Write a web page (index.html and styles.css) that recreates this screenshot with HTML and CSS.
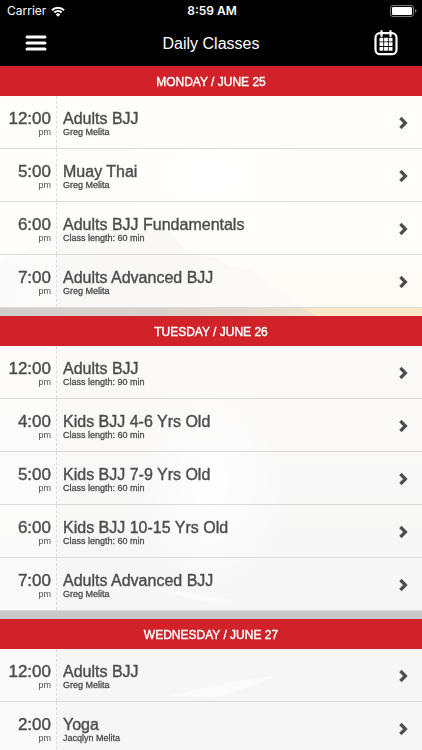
FILE: index.html
```html
<!DOCTYPE html>
<html lang="en">
<head>
<meta charset="utf-8">
<meta name="viewport" content="width=device-width, initial-scale=1">
<title>Daily Classes</title>
<link rel="stylesheet" href="styles.css">
</head>
<body>
<svg class="defs" aria-hidden="true">
  <symbol id="chevron" viewBox="0 0 10 14"><path d="M2.4 2 7.4 7 2.4 12" fill="none" stroke="currentColor" stroke-width="3.2"/></symbol>
</svg>
<svg class="backdrop" viewBox="0 0 422 750" preserveAspectRatio="none" aria-hidden="true">
  <defs>
    <linearGradient id="sky" x2="0" y2="1"><stop offset="0" stop-color="#f9efe3"/><stop offset=".75" stop-color="#fbf0e0"/><stop offset="1" stop-color="#fbe6c4"/></linearGradient>
    <linearGradient id="sea" x2="0" y2="1"><stop offset="0" stop-color="#ede0d4"/><stop offset=".35" stop-color="#dad5d1"/><stop offset=".65" stop-color="#c9c9ca"/><stop offset="1" stop-color="#c8c9ca"/></linearGradient>
    <linearGradient id="hill"><stop offset="0" stop-color="#d0cecd"/><stop offset=".5" stop-color="#d9d2cc"/><stop offset="1" stop-color="#eee0cd"/></linearGradient>
    <radialGradient id="glow"><stop offset="0" stop-color="#fff"/><stop offset=".3" stop-color="#fff" stop-opacity=".7"/><stop offset="1" stop-color="#fff" stop-opacity="0"/></radialGradient>
  </defs>
  <rect width="422" height="320" fill="url(#sky)"/>
  <ellipse cx="210" cy="177" rx="120" ry="85" fill="url(#glow)"/>
  <path d="M0 262 35 247 65 232 110 228 145 226 170 232 187 252 215 258 230 266 250 270 270 285 302 307 320 318H0Z" fill="url(#hill)"/>
  <rect y="317" width="422" height="433" fill="url(#sea)"/>
  <ellipse cx="210" cy="485" rx="75" ry="115" fill="url(#glow)" opacity=".8"/>
  <path d="M170 696Q215 684 280 675Q245 690 215 697ZM130 584 245 602 210 602Z" fill="#fff" opacity=".5"/>
</svg>
<div class="app">
  <header class="top">
    <div class="status">
      <div class="carrier"><span>Carrier</span>
        <svg class="wifi" viewBox="0 0 14 11" aria-hidden="true"><path d="M1 4.2a8.4 8.4 0 0 1 12 0M3.3 6.5a5.2 5.2 0 0 1 7.4 0" fill="none" stroke="currentColor" stroke-width="2"/><path d="M7 10.8 4.7 8.4a3.3 3.3 0 0 1 4.6 0Z" fill="currentColor"/></svg>
      </div>
      <time class="clock">8:59 AM</time>
      <svg class="battery" viewBox="0 0 27 12" aria-hidden="true"><rect x=".5" y=".5" width="23" height="11" rx="2.5" fill="none" stroke="#777"/><rect x="2" y="2" width="20" height="8" rx="1.2" fill="#fff"/><path d="M25 4q1.5.5 1.5 2T25 8Z" fill="#777"/></svg>
    </div>
    <nav class="bar">
      <button class="icon-button" aria-label="Menu"><svg class="menu" viewBox="0 0 22 16" aria-hidden="true"><path d="M2 2H20M2 8H20M2 14H20" stroke="currentColor" stroke-width="3" stroke-linecap="round"/></svg></button>
      <h1>Daily Classes</h1>
      <button class="icon-button" aria-label="Calendar"><svg class="calendar" viewBox="0 0 24 26" aria-hidden="true"><rect x="1.5" y="3.2" width="21" height="21" rx="4.5" fill="none" stroke="currentColor" stroke-width="2.2"/><path d="M7.5 1.2V6M16.5 1.2V6" stroke="currentColor" stroke-width="2.2" stroke-linecap="round"/><path d="M5.5 9.6H18.5M5.5 14.2H18.5M5.5 18.8H18.5" stroke="currentColor" stroke-width="3.7" stroke-dasharray="3.8 .8"/></svg></button>
    </nav>
  </header>
  <main class="schedule">
    <section class="day">
      <h2>MONDAY / JUNE 25</h2>
      <ul>
        <li><a class="row" href="#"><span class="time"><b>12:00</b><small>pm</small></span><span class="info"><strong>Adults BJJ</strong><small>Greg Melita</small></span><svg class="chevron" aria-hidden="true"><use href="#chevron"/></svg></a></li>
        <li><a class="row" href="#"><span class="time"><b>5:00</b><small>pm</small></span><span class="info"><strong>Muay Thai</strong><small>Greg Melita</small></span><svg class="chevron" aria-hidden="true"><use href="#chevron"/></svg></a></li>
        <li><a class="row" href="#"><span class="time"><b>6:00</b><small>pm</small></span><span class="info"><strong>Adults BJJ Fundamentals</strong><small>Class length: 60 min</small></span><svg class="chevron" aria-hidden="true"><use href="#chevron"/></svg></a></li>
        <li><a class="row" href="#"><span class="time"><b>7:00</b><small>pm</small></span><span class="info"><strong>Adults Advanced BJJ</strong><small>Greg Melita</small></span><svg class="chevron" aria-hidden="true"><use href="#chevron"/></svg></a></li>
      </ul>
    </section>
    <section class="day">
      <h2>TUESDAY / JUNE 26</h2>
      <ul>
        <li><a class="row" href="#"><span class="time"><b>12:00</b><small>pm</small></span><span class="info"><strong>Adults BJJ</strong><small>Class length: 90 min</small></span><svg class="chevron" aria-hidden="true"><use href="#chevron"/></svg></a></li>
        <li><a class="row" href="#"><span class="time"><b>4:00</b><small>pm</small></span><span class="info"><strong>Kids BJJ 4-6 Yrs Old</strong><small>Class length: 60 min</small></span><svg class="chevron" aria-hidden="true"><use href="#chevron"/></svg></a></li>
        <li><a class="row" href="#"><span class="time"><b>5:00</b><small>pm</small></span><span class="info"><strong>Kids BJJ 7-9 Yrs Old</strong><small>Class length: 60 min</small></span><svg class="chevron" aria-hidden="true"><use href="#chevron"/></svg></a></li>
        <li><a class="row" href="#"><span class="time"><b>6:00</b><small>pm</small></span><span class="info"><strong>Kids BJJ 10-15 Yrs Old</strong><small>Class length: 60 min</small></span><svg class="chevron" aria-hidden="true"><use href="#chevron"/></svg></a></li>
        <li><a class="row" href="#"><span class="time"><b>7:00</b><small>pm</small></span><span class="info"><strong>Adults Advanced BJJ</strong><small>Greg Melita</small></span><svg class="chevron" aria-hidden="true"><use href="#chevron"/></svg></a></li>
      </ul>
    </section>
    <section class="day">
      <h2>WEDNESDAY / JUNE 27</h2>
      <ul>
        <li><a class="row" href="#"><span class="time"><b>12:00</b><small>pm</small></span><span class="info"><strong>Adults BJJ</strong><small>Greg Melita</small></span><svg class="chevron" aria-hidden="true"><use href="#chevron"/></svg></a></li>
        <li><a class="row" href="#"><span class="time"><b>2:00</b><small>pm</small></span><span class="info"><strong>Yoga</strong><small>Jacqlyn Melita</small></span><svg class="chevron" aria-hidden="true"><use href="#chevron"/></svg></a></li>
      </ul>
    </section>
  </main>
</div>
</body>
</html>
```
FILE: styles.css
```css
* { box-sizing: border-box; }
body {
  margin: 0;
  color: #4d4d4d;
  font-family: "Liberation Sans", Arial, sans-serif;
}
.defs { display: none; }
.backdrop {
  position: fixed;
  inset: 0;
  width: 100%;
  height: 100%;
  z-index: -1;
}
.app {
  display: flex;
  flex-direction: column;
  height: 100vh;
}
.top {
  flex: none;
  background: #000;
  color: #fff;
}
.status {
  display: grid;
  grid-template-columns: 1fr auto 1fr;
  align-items: center;
  height: 22px;
  padding: 0 5px 0 7px;
  font: 500 12px/22px Inter, sans-serif;
}
.carrier {
  display: flex;
  align-items: center;
  gap: 5px;
  font-weight: 400;
}
.wifi { width: 14px; height: 11px; }
.clock { font-weight: 600; }
.battery { width: 27px; height: 12px; justify-self: end; }
.bar {
  display: flex;
  align-items: center;
  justify-content: space-between;
  height: 44px;
  padding: 0 18px 2px;
}
h1, h2 { margin: 0; font-weight: 400; text-align: center; }
h1 { font-size: 16px; line-height: 20px; padding-top: 2px; }
.icon-button {
  display: grid;
  place-items: center;
  width: 36px;
  height: 40px;
  padding: 0;
  border: 0;
  background: none;
  color: #fff;
}
.menu { width: 22px; height: 16px; }
.calendar { width: 24px; height: 26px; }
.schedule {
  flex: 1;
  min-height: 0;
  overflow-y: auto;
  scrollbar-width: none;
}
.day + .day { margin-top: 8px; }
h2 {
  height: 30px;
  background: #d02228;
  color: #fff;
  font-size: 12px;
  line-height: 32px;
  -webkit-text-stroke: 0.4px;
}
ul { margin: 0; padding: 0; list-style: none; }
.row {
  display: flex;
  align-items: stretch;
  height: 53px;
  padding-right: 14px;
  border-bottom: 1px solid #dcdbda;
  background: rgba(255, 255, 255, 0.84);
  color: inherit;
  text-decoration: none;
}
.time, .info {
  display: flex;
  flex-direction: column;
  justify-content: center;
}
.time {
  align-items: flex-end;
  width: 57px;
  padding: 4px 5px 0 0;
  border-right: 1px dashed #dedddd;
  background: rgba(255, 255, 255, 0.4);
}
.info { flex: 1; padding: 3px 0 0 6px; }
b, strong { font-weight: 400; -webkit-text-stroke: 0.4px; }
b { font-size: 17px; line-height: 16px; }
strong { font-size: 16px; line-height: 16px; }
small { font-size: 9px; line-height: 10px; }
.info small { -webkit-text-stroke: 0.3px; }
.chevron { width: 10px; height: 14px; margin-top: 20px; }
```
